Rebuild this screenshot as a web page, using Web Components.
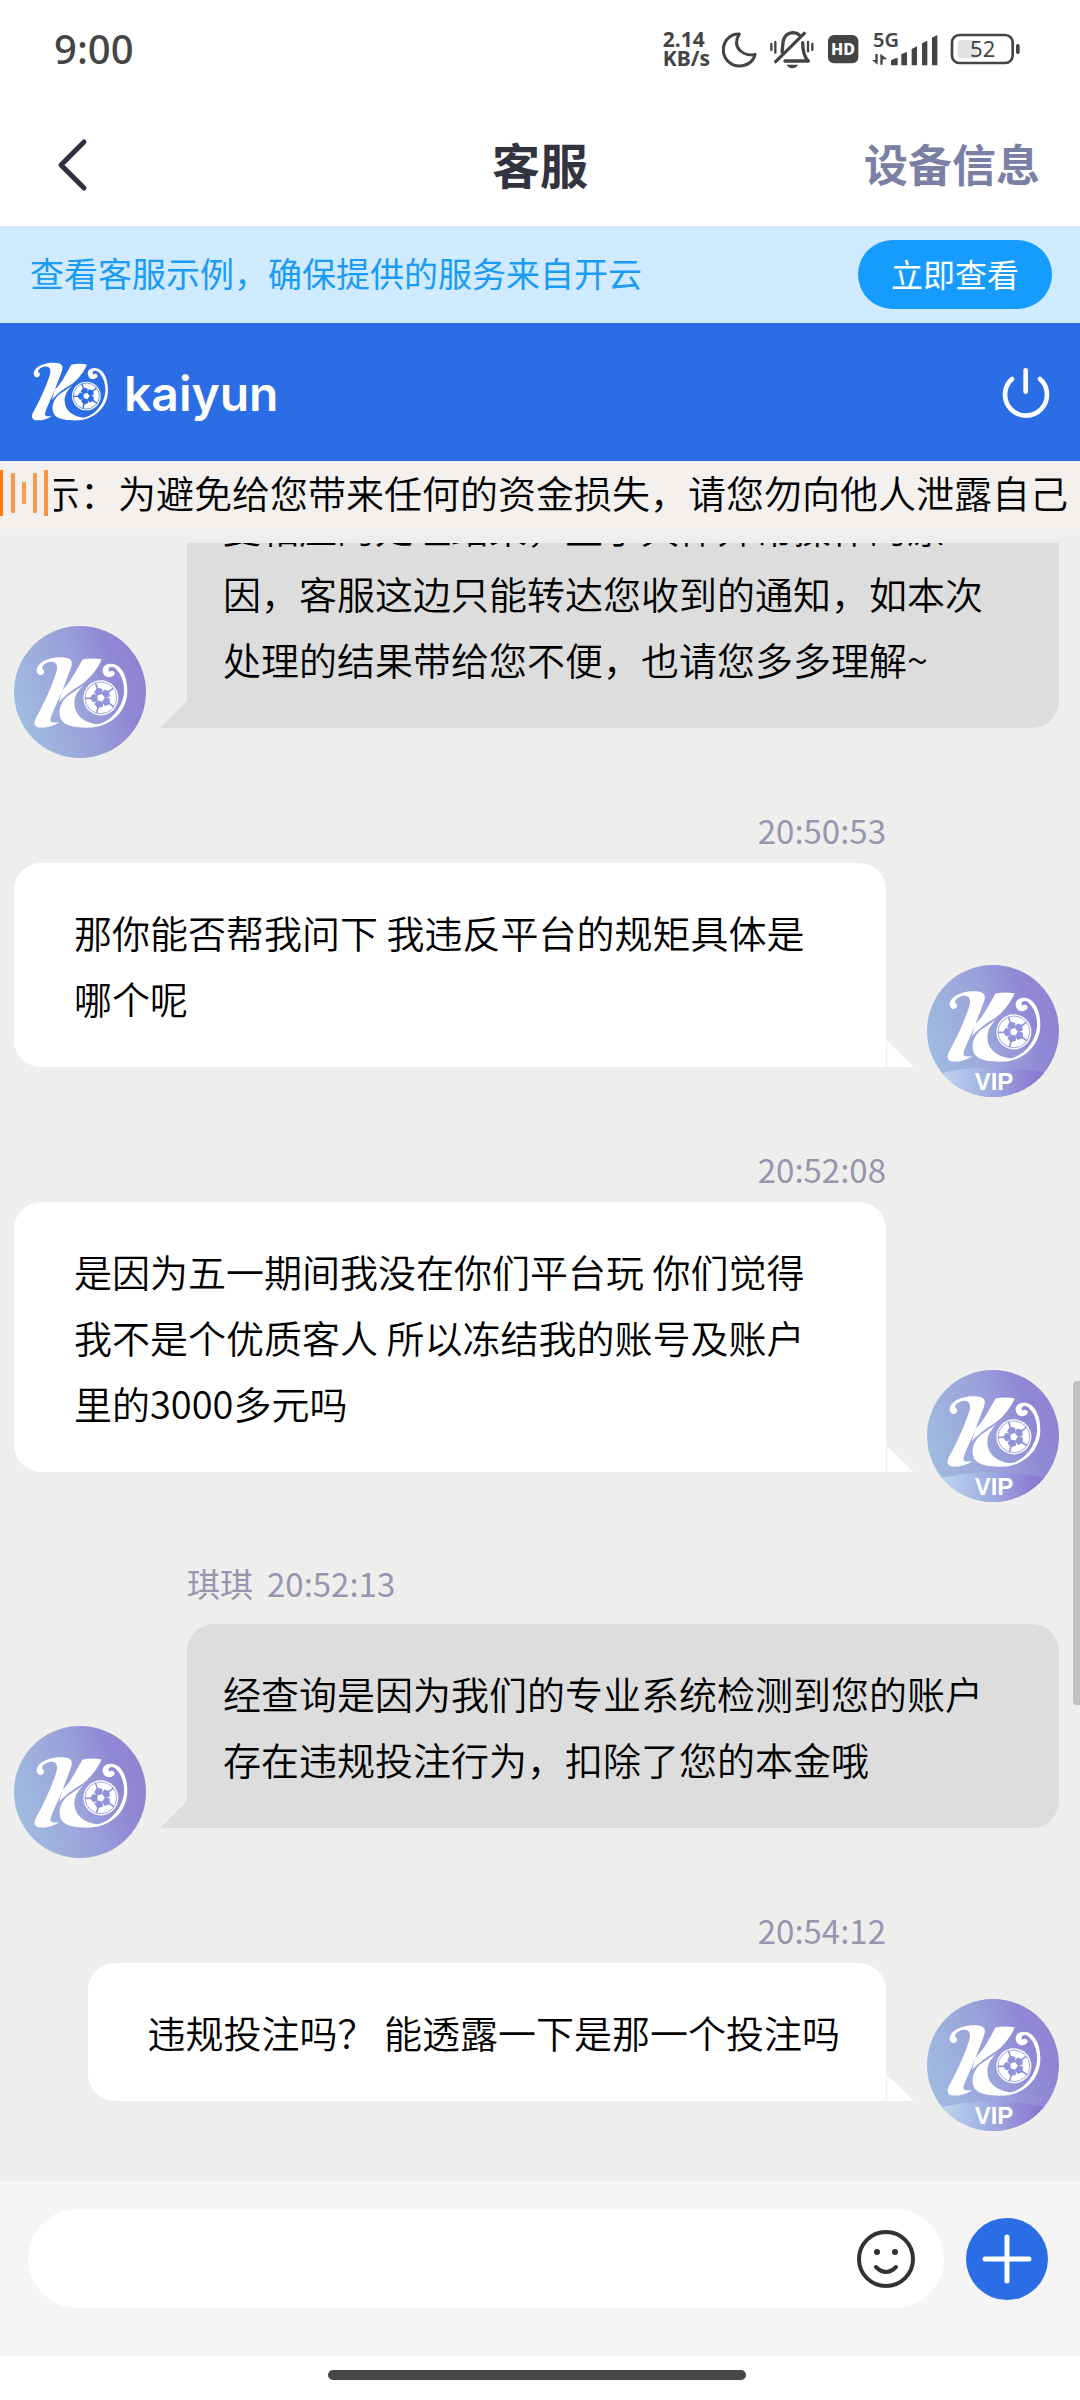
<!DOCTYPE html>
<html lang="zh-CN">
<head>
<meta charset="utf-8">
<meta name="viewport" content="width=device-width, initial-scale=1">
<title>客服</title>
<style>
  body {
    margin: 0;
    height: 100vh;
    background: #fff;
    color: #000;
    font-family: "Noto Sans CJK SC", "Noto Sans", sans-serif;
    text-spacing-trim: space-all;
  }
</style>
</head>
<body>
<chat-app></chat-app>

<script>
// K + football mark, shared by the brand header and the avatars
const PATCHES = [-20, 52, 124, 196, 268]
  .map(angle => `<path d="M179 98L190 106L186 117H172L168 106ZM177 86H181V99H177Z" transform="rotate(${angle} 179 125)"/>`)
  .join('');

const MARK = `
  <g fill="#fff">
    <path d="M22 62C17 40 50 24 82 25C106 25 112 34 105 52L84 108C70 140 58 164 55 178C54 187 66 187 77 184C62 195 46 198 32 198C16 198 12 188 20 173C36 146 60 94 70 60C75 42 66 34 52 37C36 41 30 52 39 57C43 66 28 76 22 62Z"/>
    <path d="M134 31C150 27 166 27 181 31C170 56 150 80 130 93C108 106 92 118 76 136L84 106C104 88 116 62 134 31Z"/>
    <path d="M104 116C80 130 70 162 84 182C96 197 128 199 156 198C206 194 246 156 244 104C243 66 226 41 204 41C186 41 179 54 186 67C192 78 209 76 213 66C214 58 204 56 200 61C193 50 206 46 214 52C230 66 237 88 236 112C232 150 204 184 170 190C140 186 116 170 114 142C113 124 120 110 136 94Z"/>
    <circle cx="179" cy="125" r="43"/>
  </g>
  <circle cx="179" cy="125" r="39" fill="none" stroke="var(--patch)" stroke-width="2"/>
  <g fill="var(--patch)">${PATCHES}</g>`;

class StatusBar extends HTMLElement {
  constructor() {
    super();
    this.attachShadow({ mode: 'open' }).innerHTML = `
      <style>
        :host {
          display: flex;
          align-items: center;
          justify-content: space-between;
          height: 98px;
          padding: 0 59px 6px 54px;
          color: #444;
          font-family: "Noto Sans", sans-serif;
        }
        .time { font-size: 40px; line-height: 48px; font-weight: 500; }
        .icons { display: flex; align-items: center; gap: 12px; }
        .speed {
          display: grid;
          font-size: 21px;
          line-height: 19px;
          font-weight: 700;
        }
        svg { display: block; fill: #444; }
        .line { fill: none; stroke: #444; stroke-linecap: round; stroke-linejoin: round; }
      </style>
      <span class="time">9:00</span>
      <div class="icons">
        <div class="speed"><span>2.14</span><span>KB/s</span></div>
        <svg width="35" height="37" viewBox="240 60 105 111">
          <path class="line" stroke-width="9" d="M292 69C262 68 244 92 244 117C244 144 266 165 292 165C318 165 336 149 339 130C308 138 266 112 292 69Z"/>
        </svg>
        <svg width="46" height="39" viewBox="387 60 138 117">
          <g class="line" stroke-width="10">
            <path d="M493 70L407 155"/>
            <path d="M426 126C430 110 422 72 457 68C466 68 474 71 479 76"/>
            <path d="M488 98C488 124 492 140 505 153H435"/>
            <path stroke-width="7" d="M394 102V120M406 96V128M504 96V124M517 102V120"/>
          </g>
          <path d="M440 164H474C468 178 446 178 440 164Z"/>
        </svg>
        <svg width="32" height="30" viewBox="561 72 96 90">
          <rect x="564" y="75" width="91" height="85" rx="18"/>
          <text x="609" y="135" text-anchor="middle" fill="#fff" font-size="48" font-weight="800">HD</text>
        </svg>
        <svg width="67" height="50" viewBox="690 40 201 150">
          <text x="696" y="109" font-size="60" font-weight="600">5G</text>
          <path d="M703 130H710V162L693 148H703ZM718 162H725V146H739L718 129Z"/>
          <path d="M750 164V152Q752 144 770 142V164ZM781 164V130L798 124V164ZM812 164V115L828 107V164ZM843 164V98L859 90V164ZM873 164V81L889 73V164Z"/>
        </svg>
        <svg width="71" height="32" viewBox="930 69 213 96">
          <rect class="line" stroke-width="8" x="936" y="75" width="182" height="84" rx="22"/>
          <rect x="953" y="90" width="58" height="55" rx="8" fill="#e2e2e2"/>
          <text x="1028" y="141" text-anchor="middle" font-size="66">52</text>
          <rect x="1128" y="102" width="11" height="30" rx="5"/>
        </svg>
      </div>
    `;
  }
}
customElements.define('status-bar', StatusBar);

class NavBar extends HTMLElement {
  constructor() {
    super();
    this.attachShadow({ mode: 'open' }).innerHTML = `
      <style>
        :host {
          display: grid;
          grid-template-columns: 1fr auto 1fr;
          align-items: center;
          height: 118px;
          padding: 0 40px 4px;
        }
        button { border: 0; padding: 0; background: none; cursor: pointer; font: inherit; }
        .back { justify-self: start; padding: 4px 14px 0; }
        .back svg { display: block; }
        h1 { margin: 0; font-size: 48px; line-height: 64px; font-weight: 700; color: #31333f; }
        .info { justify-self: end; font-size: 44px; line-height: 64px; font-weight: 700; color: #7a80a3; }
      </style>
      <button class="back" aria-label="返回">
        <svg width="36" height="54" viewBox="0 0 36 54" fill="none" stroke="#2f3142" stroke-width="5" stroke-linecap="round" stroke-linejoin="round"><path d="M30 4L7 27L30 50"/></svg>
      </button>
      <h1><slot></slot></h1>
      <button class="info"><slot name="action"></slot></button>
    `;
  }
}
customElements.define('nav-bar', NavBar);

class TipBanner extends HTMLElement {
  constructor() {
    super();
    this.attachShadow({ mode: 'open' }).innerHTML = `
      <style>
        :host {
          display: flex;
          align-items: center;
          justify-content: space-between;
          height: 97px;
          padding: 0 28px 0 30px;
          background: #d0ebff;
          color: #1a9bf5;
          font-size: 34px;
          line-height: 48px;
        }
        span { padding-bottom: 3px; }
        button {
          border: 0;
          border-radius: 35px;
          padding: 9px 33px 12px;
          background: #169bff;
          color: #fff;
          font: inherit;
          font-size: 32px;
          line-height: 48px;
          cursor: pointer;
        }
      </style>
      <span><slot></slot></span>
      <button><slot name="action"></slot></button>
    `;
  }
}
customElements.define('tip-banner', TipBanner);

class BrandHeader extends HTMLElement {
  constructor() {
    super();
    this.attachShadow({ mode: 'open' }).innerHTML = `
      <style>
        :host {
          --patch: #2b6de5;
          display: flex;
          align-items: center;
          justify-content: space-between;
          height: 138px;
          padding: 0 30px;
          background: #2b6de5;
          color: #fff;
        }
        .brand { display: flex; align-items: center; gap: 14px; }
        .name {
          padding-top: 4px;
          font-family: Inter, sans-serif;
          font-size: 48px;
          line-height: 56px;
          font-weight: 600;
        }
        svg { display: block; }
        button { border: 0; padding: 0; background: none; cursor: pointer; }
      </style>
      <div class="brand">
        <svg width="80" height="62" viewBox="10 20 240 186">${MARK}</svg>
        <span class="name"><slot></slot></span>
      </div>
      <button aria-label="退出">
        <svg width="48" height="51" viewBox="846 108 144 153" fill="none" stroke="#fff" stroke-width="14" stroke-linecap="round"><path d="M876 144A63 63 0 1 0 960 144M917 118V182"/></svg>
      </button>
    `;
  }
}
customElements.define('brand-header', BrandHeader);

class NoticeBar extends HTMLElement {
  constructor() {
    super();
    this.attachShadow({ mode: 'open' }).innerHTML = `
      <style>
        :host {
          display: flex;
          align-items: center;
          height: 68px;
          background: #f4f0ee;
          font-size: 38px;
          line-height: 60px;
          font-weight: 350;
        }
        svg { flex: none; display: block; }
        .window { flex: 1; min-width: 0; overflow: hidden; margin-left: 6px; padding-bottom: 6px; }
        .track { display: block; margin-left: -12px; white-space: nowrap; }
      </style>
      <svg width="48" height="50" viewBox="0 0 48 50">
        <rect width="3" height="46" fill="#ff7d10"/>
        <rect x="11" y="3" width="4" height="40" rx="1" fill="#f79a4b"/>
        <rect x="22" y="12" width="4" height="22" rx="1" fill="#f79a4b"/>
        <rect x="33" y="3" width="4" height="40" rx="1" fill="#f79a4b"/>
        <rect x="44" width="4" height="46" rx="1" fill="#fa9340"/>
      </svg>
      <div class="window"><span class="track"><slot></slot></span></div>
    `;
  }
}
customElements.define('notice-bar', NoticeBar);

class ChatAvatar extends HTMLElement {
  connectedCallback() {
    const vip = this.hasAttribute('vip');
    this.attachShadow({ mode: 'open' }).innerHTML = `
      <style>
        :host { --patch: #8f95d8; display: block; flex: none; }
        svg { display: block; border-radius: 50%; }
        text { font-family: "Liberation Sans", sans-serif; font-size: 24px; font-weight: 700; }
      </style>
      <svg width="132" height="132" viewBox="0 0 132 132">
        <defs>
          <linearGradient id="bg" x1="0" y1="0.65" x2="1" y2="0.35">
            <stop offset="0" stop-color="#a0bce0"/>
            <stop offset="0.5" stop-color="#9aa1da"/>
            <stop offset="0.8" stop-color="#9087d5"/>
            <stop offset="1" stop-color="#9084d2"/>
          </linearGradient>
          <linearGradient id="band">
            <stop offset="0.1" stop-color="#c3d6ee"/>
            <stop offset="0.45" stop-color="#9fb0e2"/>
            <stop offset="0.85" stop-color="#8a76d2"/>
          </linearGradient>
        </defs>
        <rect width="132" height="132" fill="url(#bg)"/>
        ${vip ? `<path d="M0 112Q66 92 132 112V132H0Z" fill="url(#band)"/>
        <text x="67" y="125" text-anchor="middle" fill="#fff">VIP</text>` : ''}
        <g transform="translate(14 ${vip ? 16 : 21}) scale(.407)">${MARK}</g>
      </svg>
    `;
  }
}
customElements.define('chat-avatar', ChatAvatar);

class ChatMessage extends HTMLElement {
  connectedCallback() {
    const mine = this.getAttribute('from') === 'me';
    const name = this.getAttribute('name');
    const time = this.getAttribute('time');
    this.attachShadow({ mode: 'open' }).innerHTML = `
      <style>
        :host { display: block; flex: none; }
        .meta {
          display: flex;
          gap: 14px;
          margin: 9px 0 17px 173px;
          color: #9896ae;
          font-size: 33px;
          line-height: 48px;
        }
        .row { display: flex; align-items: flex-end; gap: 41px; }
        .bubble {
          position: relative;
          flex: 1;
          margin-bottom: 30px;
          padding: 36px 46px 36px 36px;
          border-radius: 27px 27px 27px 0;
          background: #ddd;
          font-size: 38px;
          line-height: 66px;
          font-weight: 350;
        }
        .bubble::after {
          content: "";
          position: absolute;
          right: 100%;
          bottom: 0;
          width: 27px;
          height: 27px;
          background: inherit;
          clip-path: polygon(100% 0, 100% 100%, 0 100%);
        }
        :host([from="me"]) .meta { justify-content: flex-end; margin: 0 173px 9px 0; }
        :host([from="me"]) .row { flex-direction: row-reverse; }
        :host([from="me"]) .bubble {
          flex: 0 1 auto;
          padding-left: 60px;
          border-radius: 27px 27px 0 27px;
          background: #fff;
        }
        :host([from="me"]) .bubble::after {
          right: auto;
          left: 100%;
          border-left: 1px solid #eee;
          clip-path: polygon(0 0, 100% 100%, 0 100%);
        }
      </style>
      ${time ? `<div class="meta">${name ? `<span>${name}</span>` : ''}<time>${time}</time></div>` : ''}
      <div class="row">
        <chat-avatar${mine ? ' vip' : ''}></chat-avatar>
        <div class="bubble"><slot></slot></div>
      </div>
    `;
  }
}
customElements.define('chat-message', ChatMessage);

class MessageList extends HTMLElement {
  constructor() {
    super();
    this.attachShadow({ mode: 'open' }).innerHTML = `
      <style>
        :host {
          position: relative;
          display: flex;
          flex: 1 1 0;
          min-height: 0;
          padding-top: 14px;
          background: #eeeeec;
        }
        .scroller {
          display: flex;
          flex: 1;
          flex-direction: column;
          justify-content: flex-end;
          gap: 48px;
          overflow: hidden;
          padding: 0 21px 50px 14px;
        }
        .thumb {
          position: absolute;
          top: 852px;
          right: 0;
          width: 7px;
          height: 324px;
          border-radius: 4px 0 0 4px;
          background: #c1c1c1;
        }
      </style>
      <div class="scroller"><slot></slot></div>
      <div class="thumb"></div>
    `;
  }
}
customElements.define('message-list', MessageList);

class ChatComposer extends HTMLElement {
  constructor() {
    super();
    this.attachShadow({ mode: 'open' }).innerHTML = `
      <style>
        :host {
          display: flex;
          align-items: center;
          gap: 22px;
          padding: 28px 32px 48px 28px;
          background: #f5f5f5;
        }
        .field {
          display: flex;
          flex: 1;
          align-items: center;
          height: 99px;
          padding: 0 28px 0 40px;
          border-radius: 50px;
          background: #fff;
        }
        input {
          flex: 1;
          min-width: 0;
          border: 0;
          outline: 0;
          background: none;
          font: inherit;
          font-size: 38px;
        }
        button { border: 0; padding: 0; background: none; cursor: pointer; }
        svg { display: block; }
        .add {
          display: grid;
          place-items: center;
          width: 82px;
          height: 82px;
          border-radius: 50%;
          background: #2b6de5;
        }
      </style>
      <div class="field">
        <input type="text" aria-label="输入消息">
        <button aria-label="表情">
          <svg width="60" height="60" viewBox="0 0 60 60" fill="none" stroke="#303233" stroke-width="4" stroke-linecap="round">
            <circle cx="30" cy="30" r="27"/>
            <path d="M20 38Q30 48 40 38"/>
            <g fill="#303233" stroke="none"><circle cx="21" cy="23" r="3"/><circle cx="39" cy="23" r="3"/></g>
          </svg>
        </button>
      </div>
      <button class="add" aria-label="更多">
        <svg width="50" height="50" viewBox="0 0 50 50" fill="none" stroke="#fff" stroke-width="5" stroke-linecap="round"><path d="M25 3V47M3 25H47"/></svg>
      </button>
    `;
  }
}
customElements.define('chat-composer', ChatComposer);

class HomeIndicator extends HTMLElement {
  constructor() {
    super();
    this.attachShadow({ mode: 'open' }).innerHTML = `
      <style>
        :host { display: flex; justify-content: center; padding: 14px 6px 20px 0; background: #fff; }
        span { width: 418px; height: 10px; border-radius: 5px; background: #474747; }
      </style>
      <span></span>
    `;
  }
}
customElements.define('home-indicator', HomeIndicator);

class ChatApp extends HTMLElement {
  constructor() {
    super();
    this.attachShadow({ mode: 'open' }).innerHTML = `
      <style>
        :host { display: flex; flex-direction: column; height: 100%; }
      </style>
      <status-bar></status-bar>
      <nav-bar>客服<span slot="action">设备信息</span></nav-bar>
      <tip-banner>查看客服示例，确保提供的服务来自开云<span slot="action">立即查看</span></tip-banner>
      <brand-header>kaiyun</brand-header>
      <notice-bar>示：为避免给您带来任何的资金损失，请您勿向他人泄露自己</notice-bar>
      <message-list>
        <chat-message from="agent">复相应的处理结果，至于具体异常操作的原因，客服这边只能转达您收到的通知，如本次处理的结果带给您不便，也请您多多理解~</chat-message>
        <chat-message from="me" time="20:50:53">那你能否帮我问下 我违反平台的规矩具体是哪个呢</chat-message>
        <chat-message from="me" time="20:52:08">是因为五一期间我没在你们平台玩 你们觉得我不是个优质客人 所以冻结我的账号及账户里的3000多元吗</chat-message>
        <chat-message from="agent" name="琪琪" time="20:52:13">经查询是因为我们的专业系统检测到您的账户存在违规投注行为，扣除了您的本金哦</chat-message>
        <chat-message from="me" time="20:54:12">违规投注吗？ 能透露一下是那一个投注吗</chat-message>
      </message-list>
      <chat-composer></chat-composer>
      <home-indicator></home-indicator>
    `;
  }
}
customElements.define('chat-app', ChatApp);
</script>
</body>
</html>
